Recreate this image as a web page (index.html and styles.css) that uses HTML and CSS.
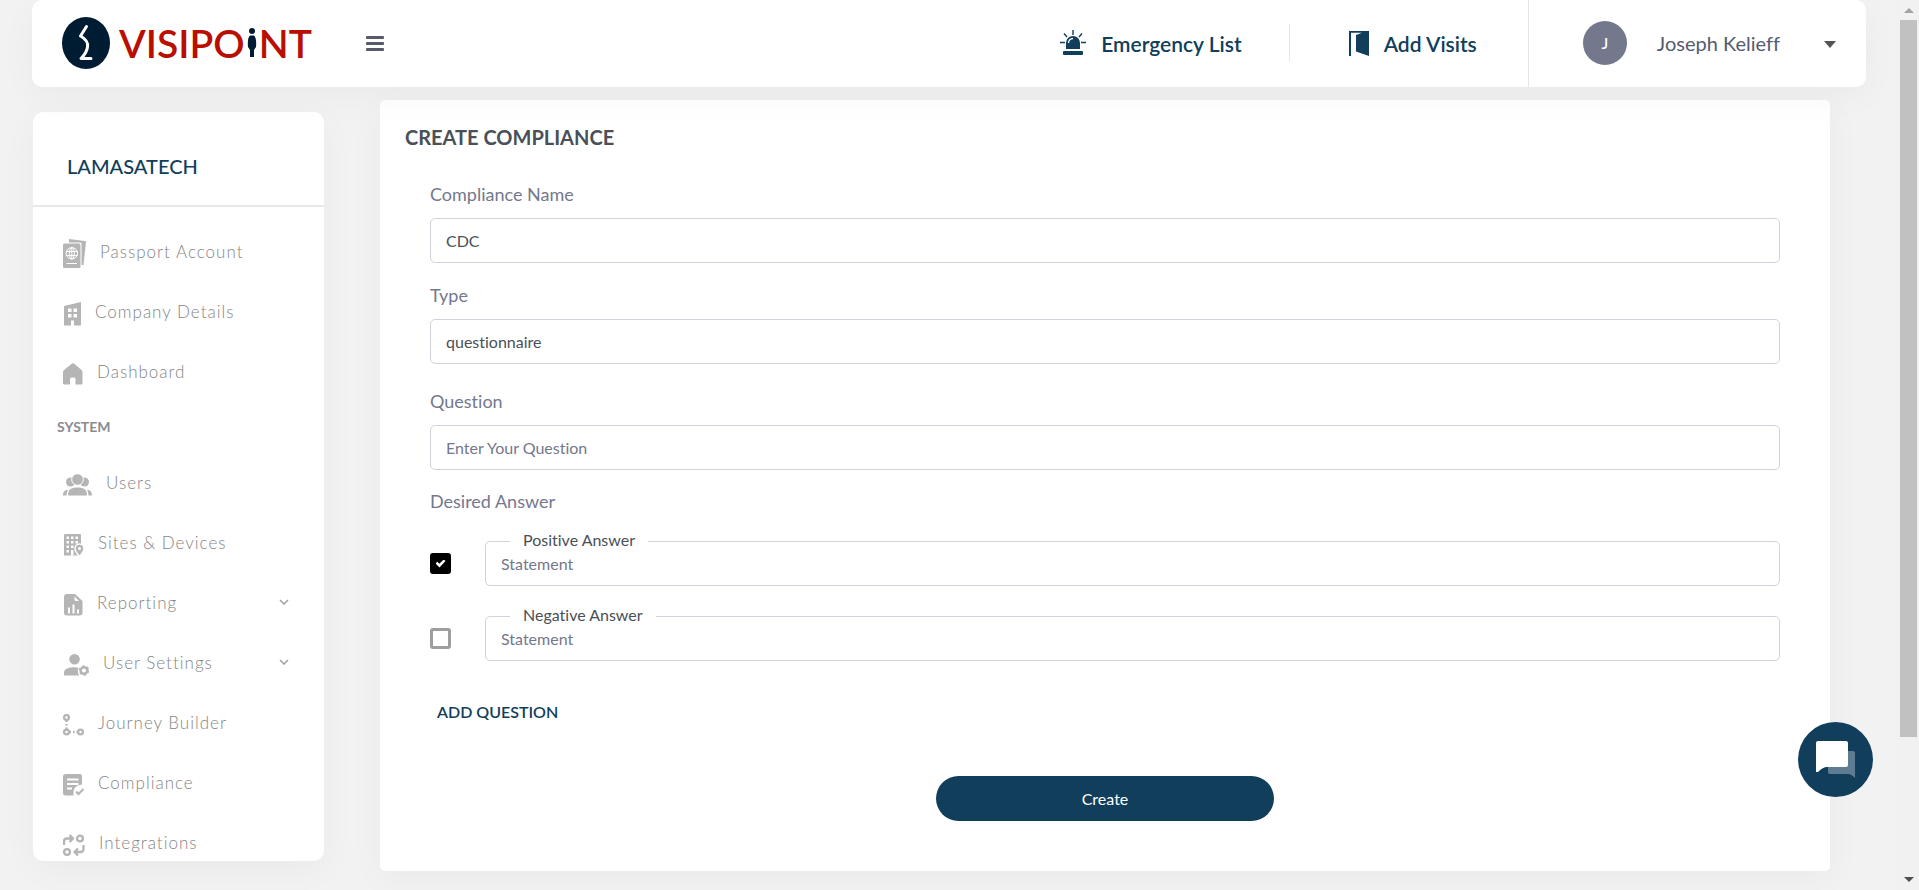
FILE: index.html
```html
<!DOCTYPE html>
<html lang="en">

<head>
    <meta charset="UTF-8">
    <meta name="viewport" content="width=device-width, initial-scale=1.0">
    <title>Create Compliance | VisiPoint</title>
    <link rel="stylesheet" href="styles.css">
</head>

<body>
    <header class="topbar">
        <a href="#" class="logo" aria-label="VisiPoint">
            <svg class="logo-mark" viewBox="0 0 48 52" width="48" height="52">
                <ellipse cx="24" cy="26" rx="24" ry="26" fill="#001c33" />
                <path d="M24.5 9.5L18.5 19C23 21.500 26.500 25 25.500 30C25 34 22.500 38 19 41.500H29" fill="none" stroke="#fff" stroke-width="3" stroke-linecap="round" stroke-linejoin="round" />
            </svg>
            <span class="logo-text">VISIPO</span>
            <svg class="logo-person" viewBox="0 0 10 29" width="10" height="29">
                <circle cx="5" cy="3" r="3" fill="#001c33" />
                <path d="M3 7.500H7C9 9 9.500 14 9 19L7 22V29H3V22L1 19C.5 14 1 9 3 7.500Z" fill="#001c33" />
            </svg>
            <span class="logo-text">NT</span>
        </a>
        <button class="menu-btn" aria-label="Toggle menu"><span></span><span></span><span></span></button>

        <nav class="actions">
            <a href="#" class="action">
                <svg viewBox="0 0 26 26" width="26" height="26">
                    <path d="M13 0V5M4 3.500L7 7M22 3.500L19 7M0 12.500H5M21 12.500H26" stroke="#103e5b" stroke-width="1.400" />
                    <path d="M6 19V13A7 7 0 0 1 20 13V19Z" fill="#103e5b" />
                    <path d="M8.500 13A4.500 4.500 0 0 1 13 8.500" fill="none" stroke="#fff" stroke-width="1.300" />
                    <rect x="3" y="21" width="20" height="4" rx="1" fill="#103e5b" />
                </svg>
                Emergency List
            </a>
            <a href="#" class="action">
                <svg viewBox="0 0 20 25" width="20" height="25">
                    <path d="M0 0H20V25L7 20.500V4L13 1.700H2V25H0Z" fill="#103e5b" />
                </svg>
                Add Visits
            </a>
        </nav>

        <button class="profile">
            <span class="avatar">J</span>
            <span class="profile-name">Joseph Kelieff</span>
            <svg viewBox="0 0 12 7" width="12" height="7"><path d="M0 0H12L6 7Z" fill="#555" /></svg>
        </button>
    </header>

    <div class="page">
        <aside class="sidebar">
            <h2 class="company">LAMASATECH</h2>
            <nav class="menu">
                <a href="#" class="menu-item">
                    <svg viewBox="0 0 23 29" width="23" height="29">
                        <path d="M6 0L22 2Q23 2 23 3L20.500 26H18.500V5Q18.500 3.500 17 3.500H6Z" fill="#b5b5b5" />
                        <rect y="4.500" width="17.500" height="24.500" rx="1.500" fill="#b5b5b5" />
                        <g fill="none" stroke="#fff">
                            <circle cx="8.800" cy="14.300" r="5.700" />
                            <ellipse cx="8.800" cy="14.300" rx="2.500" ry="5.700" />
                            <path d="M3 12.500H14.500M3 16.500H14.500M8.800 8.500V20M3.500 24.500H14" />
                        </g>
                    </svg>
                    Passport Account
                </a>
                <a href="#" class="menu-item">
                    <svg viewBox="0 0 18 24" width="18" height="24">
                        <path d="M1 4L18 0V23.500H11V18.500H8V23.500H1Z" fill="#b5b5b5" />
                        <path d="M5 6.500H8.500V10H5ZM10.500 6.500H14V10H10.500ZM5 12H8.500V15.500H5ZM10.500 12H14V15.500H10.500Z" fill="#fff" />
                    </svg>
                    Company Details
                </a>
                <a href="#" class="menu-item">
                    <svg viewBox="0 0 20 22" width="20" height="22">
                        <path d="M9 .5Q10 0 11 .5L18.500 7Q19.500 8 19.500 9V20Q19.500 21.500 18 21.500H12.500V16Q12.500 14.500 11 14.500H8.500Q7 14.500 7 16V21.500H1.500Q0 21.500 0 20V9Q0 8 1 7Z" fill="#b5b5b5" />
                    </svg>
                    Dashboard
                </a>
                <h3 class="menu-title">SYSTEM</h3>
                <a href="#" class="menu-item">
                    <svg viewBox="0 0 29 22" width="29" height="22">
                        <g fill="#b5b5b5">
                            <circle cx="7.500" cy="8" r="4.500" />
                            <circle cx="21.500" cy="8" r="4.500" />
                            <path d="M0 21.500C0 18 1.500 16 5 16Q3.500 18 3.500 21.500ZM29 21.500C29 18 27.500 16 24 16Q25.500 18 25.500 21.500Z" />
                            <path d="M5 21.500C5 15.500 8 13.500 14.500 13.500S24 15.500 24 21.500Z" />
                        </g>
                        <circle cx="14.500" cy="5.500" r="5.800" fill="#b5b5b5" stroke="#fff" />
                    </svg>
                    Users
                </a>
                <a href="#" class="menu-item">
                    <svg viewBox="0 0 21 22" width="21" height="22">
                        <path d="M1 1Q1 0 2 0H17Q18 0 18 1V21.500H1Z" fill="#b5b5b5" />
                        <path d="M3.500 2.500H6V5H3.500ZM8 2.500H10.500V5H8ZM12.500 2.500H15V5H12.500ZM3.500 7H6V9.500H3.500ZM8 7H10.500V9.500H8ZM12.500 7H15V9.500H12.500ZM3.500 11.500H6V14H3.500ZM8 11.500H10.500V14H8ZM3.500 16H6V18.500H3.500ZM8 16H10.500V21.500H8Z" fill="#fff" />
                        <path d="M16.500 22.500C13 18.500 12 17 12 14.500A4.500 4.500 0 0 1 21 14.500C21 17 20 18.500 16.500 22.500Z" fill="#b5b5b5" stroke="#fff" stroke-width="1.500" />
                        <circle cx="16.500" cy="14.500" r="1.500" fill="#fff" />
                    </svg>
                    Sites &amp; Devices
                </a>
                <a href="#" class="menu-item">
                    <svg viewBox="0 0 20 22" width="20" height="22">
                        <path d="M4 0H12L19.500 7V18.500Q19.500 21.500 16.500 21.500H4Q1 21.500 1 18.500V3Q1 0 4 0Z" fill="#b5b5b5" />
                        <path d="M11.500 2.500L16 7H13Q11.500 7 11.500 5.500ZM5 13.500H7V19.500H5ZM9.500 10.500H11.500V19.500H9.500ZM14 15.500H16V19.500H14Z" fill="#fff" />
                    </svg>
                    Reporting
                    <svg class="arrow" viewBox="0 0 10 6" width="10" height="6"><path d="M1 1L5 5L9 1" /></svg>
                </a>
                <a href="#" class="menu-item">
                    <svg viewBox="0 0 26 22" width="26" height="22">
                        <g fill="#b5b5b5">
                            <circle cx="11.500" cy="5.300" r="5.300" />
                            <path d="M1 21.500V18.500C1 15 6 13.300 11.500 13.300Q14 13.300 15.500 13.700Q14 17 16 21.500Z" />
                        </g>
                        <circle cx="21" cy="16.500" r="3.300" fill="none" stroke="#b5b5b5" stroke-width="2.500" />
                        <circle cx="21" cy="16.500" r="4.500" fill="none" stroke="#b5b5b5" stroke-width="1.500" stroke-dasharray="2.400 2.300" />
                    </svg>
                    User Settings
                    <svg class="arrow" viewBox="0 0 10 6" width="10" height="6"><path d="M1 1L5 5L9 1" /></svg>
                </a>
                <a href="#" class="menu-item">
                    <svg viewBox="0 0 21 22" width="21" height="22">
                        <g fill="none" stroke="#b5b5b5" stroke-width="2.300">
                            <circle cx="3.500" cy="3.500" r="2.400" />
                            <circle cx="3.500" cy="18" r="2.400" />
                            <circle cx="17.500" cy="18" r="2.400" />
                            <path d="M3.500 6V8M3.500 10V11.500M3.500 13.500V15.500M6 18H8M10 18H11.500M13.500 18H15" />
                        </g>
                    </svg>
                    Journey Builder
                </a>
                <a href="#" class="menu-item">
                    <svg viewBox="0 0 21 22" width="21" height="22">
                        <path d="M2.500 0H17Q19 0 19 2V10.500Q11 11 10.500 18V21.500H2.500Q0 21.500 0 19V2.500Q0 0 2.500 0Z" fill="#b5b5b5" />
                        <path d="M4 5.500H15.500M4 10H15.500M4 14.500H9" stroke="#fff" stroke-width="1.800" />
                        <path d="M13 17.500L15.500 20L20.500 15" fill="none" stroke="#b5b5b5" stroke-width="2" />
                    </svg>
                    Compliance
                </a>
                <a href="#" class="menu-item">
                    <svg viewBox="0 0 22 22" width="22" height="22">
                        <g fill="none" stroke="#b5b5b5" stroke-width="2.300">
                            <circle cx="17" cy="4.500" r="2.900" />
                            <circle cx="4" cy="18" r="2.900" />
                            <path d="M1 11V7.500Q1 4.500 4 4.500H10M6.500 1L10 4.500L6.500 8M20.500 11V15Q20.500 18 17.500 18H11.500M15 14.500L11.500 18L15 21.500" />
                        </g>
                    </svg>
                    Integrations
                </a>
            </nav>
        </aside>

        <main class="card">
            <h1 class="card-title">CREATE COMPLIANCE</h1>
            <form class="form">
                <div class="field">
                    <label for="name">Compliance Name</label>
                    <input type="text" id="name" value="CDC">
                </div>
                <div class="field type">
                    <label for="type">Type</label>
                    <input type="text" id="type" value="questionnaire">
                </div>
                <div class="field">
                    <label for="question">Question</label>
                    <input type="text" id="question" placeholder="Enter Your Question">
                </div>
                <p class="answers-title">Desired Answer</p>
                <div class="answer">
                    <input type="checkbox" class="check" aria-label="Positive is desired" checked>
                    <div class="answer-box">
                        <label for="positive">Positive Answer</label>
                        <input type="text" id="positive" placeholder="Statement">
                    </div>
                </div>
                <div class="answer">
                    <input type="checkbox" class="check" aria-label="Negative is desired">
                    <div class="answer-box">
                        <label for="negative">Negative Answer</label>
                        <input type="text" id="negative" placeholder="Statement">
                    </div>
                </div>
                <button type="button" class="add-btn">ADD QUESTION</button>
                <button type="button" class="create-btn">Create</button>
            </form>
        </main>
    </div>

    <button class="chat" aria-label="Open chat">
        <svg viewBox="0 0 40 38" width="40" height="38">
            <path d="M12 10H37Q39 10 39 12V37Q35 33 32 33H14Q12 33 12 31Z" fill="#5d7c91" />
            <path d="M2 0H30Q32 0 32 2V24Q32 26 30 26H11Q7 26 2 31H0V2Q0 0 2 0Z" fill="#fff" />
        </svg>
    </button>

    <div class="scrollbar" aria-hidden="true">
        <svg viewBox="0 0 10 5" width="10" height="5"><path d="M0 5L5 0L10 5Z" fill="#a3a3a3" /></svg>
        <div class="thumb"></div>
        <svg viewBox="0 0 10 5" width="10" height="5"><path d="M0 0L5 5L10 0Z" fill="#505050" /></svg>
    </div>
</body>

</html>
```
FILE: styles.css
```css
* {
    margin: 0;
    padding: 0;
    box-sizing: border-box;
    font-family: Lato, 'Open Sans', sans-serif;
    font-variant-ligatures: none;
}

body {
    background: #f2f2f2;
    min-height: 100vh;
    padding: 0 53px 0 32px;
    font-size: 16px;
    color: #495057;
}

a {
    text-decoration: none;
    color: inherit;
}

button {
    border: 0;
    background: none;
    cursor: pointer;
    font-size: 16px;
}

svg {
    flex-shrink: 0;
}

/* top bar */
.topbar {
    position: relative;
    z-index: 2;
    display: flex;
    align-items: center;
    height: 87px;
    padding-bottom: 1px;
    background: #fff;
    border-radius: 10px;
    box-shadow: 0 8px 36px rgba(0, 0, 0, 0.04);
}

.logo {
    display: flex;
    align-items: center;
    margin-left: 30px;
}

.logo-mark {
    margin-right: 9px;
}

.logo-text {
    font-size: 39px;
    line-height: 52px;
    font-weight: 600;
    color: #b90e00;
}

.logo-person {
    margin: 0 2px 2px;
}

.menu-btn {
    display: flex;
    flex-direction: column;
    gap: 3px;
    margin-left: 54px;
}

.menu-btn span {
    width: 18px;
    height: 3px;
    border-radius: 1px;
    background: #555b6d;
}

.actions {
    display: flex;
    align-items: center;
    margin-left: auto;
}

.action {
    display: flex;
    align-items: center;
    gap: 15px;
    height: 38px;
    padding-right: 47px;
    font-size: 21px;
    font-weight: 600;
    color: #103e5b;
}

.action + .action {
    border-left: 1px solid #e8e8e8;
    padding-left: 59px;
    padding-right: 51px;
}

.profile {
    display: flex;
    align-items: center;
    height: 87px;
    margin-bottom: -1px;
    padding: 0 30px 1px 54px;
    border-left: 1px solid #e4e4e4;
}

.profile svg {
    margin-top: 3px;
}

.avatar {
    width: 44px;
    height: 44px;
    border-radius: 50%;
    background: #74788d;
    color: #fff;
    line-height: 44px;
    font-weight: 500;
}

.profile-name {
    margin: 0 44px 0 30px;
    font-size: 20px;
    color: #555b6d;
}

/* side menu */
.page {
    display: flex;
    align-items: flex-start;
}

.sidebar {
    width: 291px;
    height: calc(100vh - 141px);
    margin: 25px 56px 0 1px;
    overflow: hidden;
    flex-shrink: 0;
    background: #fff;
    border-radius: 10px;
    box-shadow: 0 8px 36px rgba(0, 0, 0, 0.04);
}

.company {
    padding: 39px 34px 24px;
    border-bottom: 2px solid #e8e8e8;
    font-size: 20px;
    line-height: 30px;
    font-weight: 500;
    color: #103e5b;
}

.menu {
    padding: 14px 35px 0 30px;
}

.menu-item {
    display: flex;
    align-items: center;
    height: 60px;
    font-size: 17px;
    font-weight: 300;
    letter-spacing: 1px;
    color: #858585;
}

.menu-item svg {
    margin: 5px 14px 0 0;
}

.menu-item .arrow {
    margin: 0 0 0 auto;
    fill: none;
    stroke: #a0a0a0;
    stroke-width: 1.5;
}

.menu-title {
    margin-left: -6px;
    font-size: 14px;
    line-height: 51px;
    font-weight: 700;
    color: #8a8c90;
}

/* form card */
.card {
    flex: 1;
    margin: 13px 36px 19px 0;
    padding: 25px 50px 50px;
    background: #fff;
    border-radius: 5px;
    box-shadow: 0 8px 36px rgba(0, 0, 0, 0.04);
}

.card-title {
    margin: 0 0 31px -25px;
    font-size: 20px;
    line-height: 25px;
    font-weight: 700;
}

.form {
    display: flex;
    flex-direction: column;
}

.field {
    display: flex;
    flex-direction: column;
    gap: 10px;
    margin-bottom: 18px;
}

.field.type {
    margin: 1px 0 24px;
}

.field label,
.answers-title {
    font-size: 18px;
    line-height: 27px;
    color: #74788d;
}

.answers-title {
    margin-bottom: 26px;
}

input[type="text"] {
    display: block;
    width: 100%;
    height: 45px;
    padding: 0 15px;
    border: 1px solid #ced4da;
    border-radius: 5px;
    outline: 0;
    background: #fff;
    font-size: 16px;
    color: #495057;
}

input::placeholder {
    color: #74788d;
    opacity: 1;
}

.answer {
    display: flex;
    align-items: center;
    gap: 34px;
    margin-bottom: 30px;
}

.check {
    appearance: none;
    width: 21px;
    height: 21px;
    border: 3px solid #9e9e9e;
    border-radius: 3px;
    background: #fff;
}

.check:checked {
    display: grid;
    place-items: center;
    border-color: #000;
    background: #000;
}

.check:checked::before {
    content: '';
    width: 10px;
    height: 8px;
    background: #fff;
    clip-path: polygon(0 50%, 18% 28%, 38% 52%, 82% 0, 100% 20%, 40% 100%);
}

.answer-box {
    position: relative;
    flex: 1;
}

/* label sits on the top border of the box */
.answer-box label {
    position: absolute;
    top: -13px;
    left: 25px;
    padding: 0 13px;
    line-height: 24px;
    background: linear-gradient(#fff, #fff) center / 100% 4px no-repeat;
}

.add-btn {
    align-self: flex-start;
    margin: 9px 0 52px;
    padding: 0 7px;
    line-height: 24px;
    font-weight: 600;
    color: #103e5b;
}

.create-btn {
    align-self: center;
    width: 25%;
    height: 45px;
    border-radius: 23px;
    background: #103e5b;
    color: #fff;
}

/* chat bubble */
.chat {
    position: fixed;
    right: 46px;
    bottom: 93px;
    z-index: 3;
    display: flex;
    align-items: center;
    justify-content: center;
    width: 75px;
    height: 75px;
    border-radius: 50%;
    background: #103e5b;
}

.scrollbar {
    position: fixed;
    top: 0;
    right: 0;
    bottom: 0;
    z-index: 3;
    display: flex;
    flex-direction: column;
    align-items: center;
    justify-content: space-between;
    width: 21px;
    padding: 8px 2px;
    background: #f1f1f1;
}

.thumb {
    width: 17px;
    height: 82%;
    margin: 7px 0 auto;
    background: #c1c1c1;
}
```
